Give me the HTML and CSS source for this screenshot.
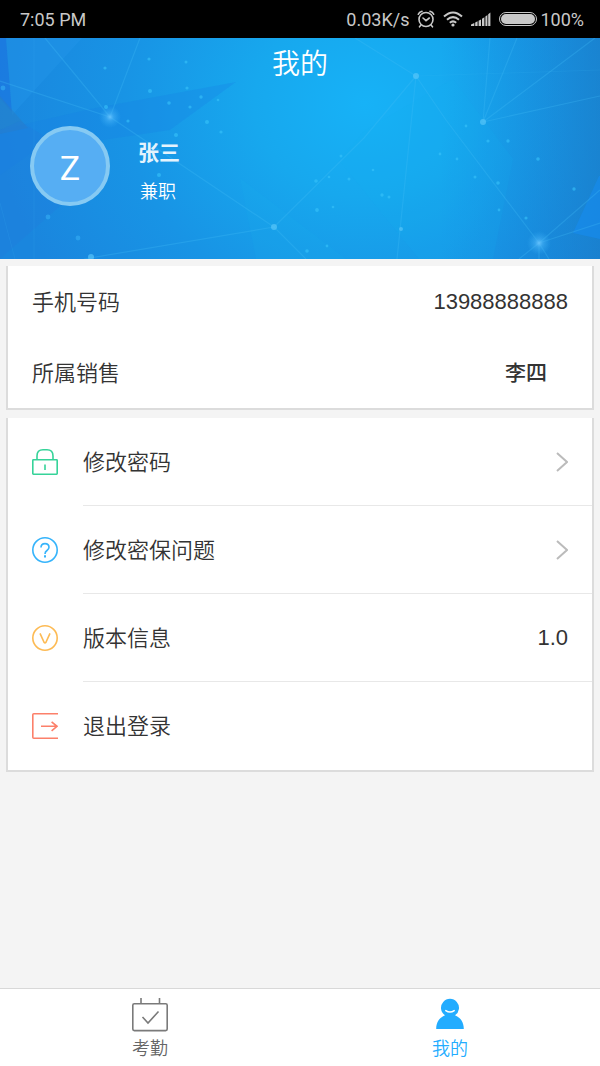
FILE: index.html
```html
<!DOCTYPE html>
<html lang="zh-CN">
<head>
  <meta charset="UTF-8" />
  <meta name="viewport" content="width=device-width, initial-scale=1.0" />
  <title>我的</title>
  <link rel="stylesheet" href="styles.css">
</head>
<body>
  <div class="status-bar">
    <span>7:05 PM</span>
    <div class="status-right">
      <span>0.03K/s</span>
      <svg width="18" height="18" viewBox="0 0 18 18" fill="none" stroke="#c8c8c8" stroke-width="1.6" stroke-linecap="round">
        <circle cx="9" cy="9.5" r="7" />
        <path d="M1.3 4.2Q2.2 1.8 5 1.2M16.7 4.2Q15.8 1.8 13 1.2M6 8l3 2.6L12.3 8M3.8 15.2l-1.3 1.6M14.2 15.2l1.3 1.6" />
      </svg>
      <svg width="20" height="16" viewBox="0 0 20 16" fill="none" stroke="#c8c8c8" stroke-width="2">
        <path d="M1 5.6Q10-2.6 19 5.6M4 8.8Q10 3.4 16 8.8M6.8 11.8Q10 9 13.2 11.8" />
        <circle cx="10" cy="14" r="1.6" fill="#c8c8c8" stroke="none" />
      </svg>
      <svg width="20" height="14" viewBox="0 0 20 14" fill="#c8c8c8">
        <path d="M0 14v-1.5L3.3 11v3zM4.2 14v-3.4l2.4-1.3V14zM7.6 14V8.8L10 7.4V14zM11 14V6.8l2.4-1.6V14zM14.4 14V4.4l2-1.5V14zM17.2 14V2.2L19.4.6V14z" />
      </svg>
      <div class="battery-group">
        <span class="battery"></span>
        <span>100%</span>
      </div>
    </div>
  </div>

  <header class="hero">
    <!-- Network pattern behind the profile -->
    <svg class="hero-bg" viewBox="0 0 600 221" preserveAspectRatio="xMidYMid slice" aria-hidden="true">
      <defs>
        <radialGradient id="sky" gradientUnits="userSpaceOnUse" cx="365" cy="65" r="370" gradientTransform="translate(0 10) scale(1 .85)">
          <stop offset="0" stop-color="#17b2f7" />
          <stop offset=".3" stop-color="#17a8ee" />
          <stop offset=".65" stop-color="#1894e5" />
          <stop offset="1" stop-color="#1a86de" />
        </radialGradient>
        <radialGradient id="glow">
          <stop offset="0" stop-color="#6cc6ff" stop-opacity=".9" />
          <stop offset=".35" stop-color="#4db8fa" stop-opacity=".5" />
          <stop offset="1" stop-color="#35adf5" stop-opacity="0" />
        </radialGradient>
        <linearGradient id="shade">
          <stop offset="0" stop-color="#1572d8" stop-opacity="0" />
          <stop offset="1" stop-color="#1b70b8" stop-opacity=".45" />
        </linearGradient>
      </defs>
      <rect width="600" height="221" fill="url(#sky)" />
      <rect x="440" width="160" height="221" fill="url(#shade)" />
      <path d="M0 0h6l6 74-12-14z" fill="#1c6fe2" opacity=".45" />
      <path d="M6 0h76L12 77z" fill="#2497ec" opacity=".35" />
      <path d="M236 44L90 71 0 92v45l36-25 134-20z" fill="#1682e6" opacity=".3" />
      <path d="M0 58l28 32L0 96z" fill="#2a7fc4" opacity=".45" />
      <path d="M20 83l80 50L0 221V92z" fill="#2276dc" opacity=".25" />
      <path d="M365 92l-26 30 80 99h74l20-100-60-80z" fill="#16b4ee" opacity=".14" />
      <path d="M240 140l16 81h90z" fill="#16b4ee" opacity=".12" />
      <path d="M599 138l-26 57 27 6v-63z" fill="#168cf0" opacity=".6" />
      <g fill="none" stroke="#43bef8" stroke-width="1.2" opacity=".28">
        <path d="M45 0l65 79 164 110M140 0l-30 79L0 43" />
        <path d="M274 189l-190 32M274 189l32 32M274 189l90-89 52-62" />
        <path d="M355 0l61 38-19 183M416 38l30 44 93 123" />
        <path d="M490 0l-7 84L517 0M595 0L483 84l117-26" />
        <path d="M539 205l61-53M539 205l61-20M539 205l-20 16M539 205v16M539 205l10 16" />
      </g>
      <g fill="none" stroke="#43bef8" opacity=".12">
        <path d="M34 0v221M416 38l184-6M0 165l15 56" />
      </g>
      <circle cx="110" cy="79" r="11" fill="url(#glow)" />
      <circle cx="539" cy="205" r="12" fill="url(#glow)" />
      <g fill="#5cc8fa" opacity=".65">
        <circle cx="416" cy="38" r="3" />
        <circle cx="483" cy="84" r="3" />
        <circle cx="274" cy="189" r="3" />
        <circle cx="91" cy="219" r="3" />
        <circle cx="401" cy="191" r="2" />
      </g>
      <g fill="#39c4fb" opacity=".6">
        <circle cx="149" cy="21" r="1.6" /><circle cx="186" cy="24" r="1.5" />
        <circle cx="105" cy="30" r="1.6" /><circle cx="150" cy="53" r="2" />
        <circle cx="187" cy="50" r="1.6" /><circle cx="201" cy="59" r="1.7" />
        <circle cx="169" cy="65" r="1.8" /><circle cx="190" cy="69" r="1.6" />
        <circle cx="218" cy="62" r="1.3" /><circle cx="207" cy="84" r="2" />
        <circle cx="221" cy="94" r="1.6" /><circle cx="176" cy="97" r="2" />
        <circle cx="106" cy="69" r="2" /><circle cx="128" cy="83" r="1.6" />
        <circle cx="159" cy="137" r="2" />
        <circle cx="341" cy="118" r="1.5" /><circle cx="316" cy="143" r="1.8" />
        <circle cx="329" cy="139" r="1.3" /><circle cx="349" cy="141" r="1.5" />
        <circle cx="373" cy="132" r="1.3" /><circle cx="382" cy="157" r="1.7" />
        <circle cx="389" cy="159" r="1.5" /><circle cx="317" cy="172" r="1.9" />
        <circle cx="333" cy="169" r="1.3" /><circle cx="307" cy="213" r="1.8" />
        <circle cx="327" cy="208" r="1.4" /><circle cx="440" cy="116" r="1.4" />
        <circle cx="457" cy="121" r="1.4" /><circle cx="475" cy="139" r="1.5" />
        <circle cx="498" cy="145" r="1.8" /><circle cx="488" cy="103" r="1.6" />
        <circle cx="508" cy="103" r="1.7" /><circle cx="538" cy="121" r="1.8" />
        <circle cx="574" cy="151" r="1.7" /><circle cx="499" cy="172" r="1.4" />
        <circle cx="526" cy="180" r="1.6" /><circle cx="466" cy="88" r="1.4" />
      </g>
      <g fill="#35aef5" opacity=".6">
        <circle cx="48" cy="179" r="2.4" />
        <circle cx="78" cy="200" r="2.4" />
        <circle cx="3" cy="50" r="2.4" />
      </g>
    </svg>
    <h1>我的</h1>
    <div class="profile">
      <div class="avatar">Z</div>
      <div class="profile-text">
        <div class="name">张三</div>
        <div class="role">兼职</div>
      </div>
    </div>
  </header>

  <main>
    <dl class="card info">
      <div class="info-row">
        <dt>手机号码</dt>
        <dd class="phone">13988888888</dd>
      </div>
      <div class="info-row">
        <dt>所属销售</dt>
        <dd class="seller">李四</dd>
      </div>
    </dl>

    <ul class="card menu">
      <li>
        <a class="menu-row" href="#password">
          <svg class="icon" viewBox="0 0 26 26" fill="none" stroke="#36d399" stroke-width="1.6">
            <rect x=".8" y="10.8" width="24.4" height="14.4" rx=".6" />
            <path d="M5 10.8V7Q5 .8 11 .8h4q6 0 6 6.2v3.8M13 15.5V21" />
          </svg>
          <span class="menu-body">
            <span class="label">修改密码</span>
            <svg class="chevron" viewBox="0 0 12 20"><path d="M1 1l10 9-10 9" /></svg>
          </span>
        </a>
      </li>
      <li>
        <a class="menu-row" href="#question">
          <svg class="icon" viewBox="0 0 26 26" fill="none" stroke="#36b4fb" stroke-width="1.6">
            <circle cx="13" cy="13" r="12.2" />
            <path d="M9 10.5Q9 6.6 13 6.6t4 3.7q0 1.800-2 3.200t-2 3.500" />
            <path d="M13 18.2v2.200" stroke-width="2" />
          </svg>
          <span class="menu-body">
            <span class="label">修改密保问题</span>
            <svg class="chevron" viewBox="0 0 12 20"><path d="M1 1l10 9-10 9" /></svg>
          </span>
        </a>
      </li>
      <li>
        <div class="menu-row">
          <svg class="icon" viewBox="0 0 26 26" fill="none" stroke="#fdbb55" stroke-width="1.6">
            <circle cx="13" cy="13" r="12.2" />
            <path d="M8 8.3l4.200 9.200q.8 1 1.600 0L18 8.300" />
          </svg>
          <span class="menu-body">
            <span class="label">版本信息</span>
            <span class="version">1.0</span>
          </span>
        </div>
      </li>
      <li>
        <a class="menu-row" href="#logout">
          <svg class="icon" viewBox="0 0 26 26" fill="none" stroke="#fc806a" stroke-width="1.6">
            <path d="M26 .8H1.800q-1 0-1 1v22.400q0 1 1 1H26M9 13.300h16M19.600 8.800l5.400 4.500-5.400 4.500" />
          </svg>
          <span class="menu-body">
            <span class="label">退出登录</span>
          </span>
        </a>
      </li>
    </ul>
  </main>

  <nav class="tab-bar">
    <a class="tab" href="#attendance">
      <svg width="36" height="36" viewBox="0 0 36 36" fill="none" stroke="#7a7a7a" stroke-width="1.6">
        <rect x=".8" y="6.8" width="34.4" height="26.8" rx="1.5" />
        <path d="M9 1v6M27.5 1v6M10.500 20l5.500 6 10.500-11.500" />
      </svg>
      <span>考勤</span>
    </a>
    <a class="tab active" href="#mine">
      <svg width="36" height="36" viewBox="0 0 36 36">
        <path d="M4.200 32C4.200 24.500 8 20.500 13 18.300A9 9 0 1 1 23 18.300C28 20.500 31.800 24.500 31.800 32z" fill="#22acff" />
        <path d="M13.800 13.600q4.200 3 8.400 0" fill="none" stroke="#fff" stroke-width="1.5" stroke-linecap="round" />
      </svg>
      <span>我的</span>
    </a>
  </nav>
</body>
</html>
```
FILE: styles.css
```css
* {
  box-sizing: border-box;
}

body {
  margin: 0;
  min-height: 100vh;
  display: flex;
  flex-direction: column;
  font-family: "Noto Sans CJK SC", sans-serif;
  font-size: 22px;
  font-weight: 350;
  color: #333;
  background: #f4f4f4;
}

a {
  color: inherit;
  text-decoration: none;
}

svg {
  display: block;
  flex-shrink: 0;
}

/* Status bar */
.status-bar {
  display: flex;
  justify-content: space-between;
  align-items: center;
  height: 38px;
  padding: 0 16px 0 20px;
  font-family: Roboto, sans-serif;
  font-size: 18px;
  font-weight: 400;
  color: #c8c8c8;
  background: #000;
}

.status-right {
  display: flex;
  align-items: center;
  gap: 8px;
}

.battery-group {
  display: flex;
  align-items: center;
  gap: 3px;
}

.battery {
  width: 38px;
  height: 14px;
  border: 1px solid #c8c8c8;
  border-radius: 7px;
  padding: 1px;
  background: #c8c8c8 content-box;
}

/* Profile header */
.hero {
  position: relative;
  height: 221px;
  color: #fff;
  background: #18a0ea;
  overflow: hidden;
}

.hero-bg {
  position: absolute;
  top: 0;
  left: 0;
  width: 100%;
  height: 100%;
}

.hero h1 {
  position: relative;
  margin: 0;
  font-size: 28px;
  font-weight: 350;
  line-height: 48px;
  text-align: center;
}

.profile {
  position: relative;
  display: flex;
  align-items: center;
  gap: 28px;
  padding: 40px 30px 0;
}

.avatar {
  width: 80px;
  height: 80px;
  border: 4px solid #86caf3;
  border-radius: 50%;
  padding-top: 2px;
  font-family: Roboto, sans-serif;
  font-size: 34px;
  font-weight: 400;
  line-height: 72px;
  text-align: center;
  background: #56aef3;
}

.profile-text {
  display: flex;
  flex-direction: column;
  gap: 10px;
  padding-top: 8px;
}

.name {
  font-size: 21px;
  font-weight: 700;
  line-height: 30px;
  color: #e4f3fd;
}

.role {
  padding-left: 2px;
  font-size: 18px;
  line-height: 28px;
}

/* Cards */
main {
  flex: 1;
  display: flex;
  flex-direction: column;
  gap: 8px;
  padding: 7px 6px;
}

.card {
  margin: 0;
  padding: 0;
  list-style: none;
  border: 2px solid #dcdcdc;
  border-top: none;
  background: #fff;
}

.info-row {
  display: flex;
  justify-content: space-between;
  align-items: center;
  height: 71px;
  padding: 0 24px 4px;
}

.info-row dd {
  margin: 0;
  font-weight: 500;
}

.info-row .phone {
  padding-top: 4px;
  font-family: "Liberation Sans", sans-serif;
}

.info-row .seller {
  padding-right: 21px;
  font-size: 21px;
}

.menu-row {
  display: flex;
  gap: 25px;
  height: 88px;
  padding-left: 24px;
}

.icon {
  width: 26px;
  height: 26px;
  align-self: center;
}

.menu-body {
  flex: 1;
  display: flex;
  justify-content: space-between;
  align-items: center;
  padding-right: 24px;
  border-bottom: 1px solid #e8e8e8;
}

.label {
  padding-bottom: 4px;
}

.menu li:last-child .menu-body {
  border-bottom: none;
}

.chevron {
  width: 12px;
  height: 20px;
  fill: none;
  stroke: #bbb;
  stroke-width: 2;
}

.version {
  font-family: "Liberation Sans", sans-serif;
}

/* Bottom tabs */
.tab-bar {
  display: flex;
  height: 78px;
  border-top: 1px solid #d8d8d8;
  background: #fff;
}

.tab {
  flex: 1;
  display: flex;
  flex-direction: column;
  align-items: center;
  padding-top: 8px;
  font-size: 18px;
  line-height: 28px;
  color: #666;
}

.tab.active {
  color: #22acff;
}
```
